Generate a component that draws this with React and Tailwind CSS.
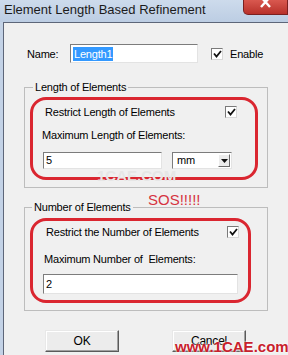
import React from "react";

const font = { fontFamily: '"Liberation Sans", Arial, sans-serif' };

function Check({ className = "" }) {
  return (
    <div
      className={`w-[12px] h-[12px] bg-white border border-t-[#7a7a7a] border-l-[#7a7a7a] border-b-[#d8d8d8] border-r-[#d8d8d8] flex items-center justify-center shrink-0 ${className}`}
    >
      <svg width="9" height="8" viewBox="0 0 9 8">
        <path d="M1 3.5 L3.5 6.5 L8 1" stroke="#111" strokeWidth="1.8" fill="none" />
      </svg>
    </div>
  );
}

function Field({ className = "", children }) {
  return (
    <div
      className={`bg-white border border-t-[#7c7c7c] border-l-[#7c7c7c] border-b-[#e3e3e3] border-r-[#e3e3e3] flex items-center pl-[2px] text-[11px] leading-none text-black ${className}`}
    >
      {children}
    </div>
  );
}

function Button({ children, className = "" }) {
  return (
    <div
      className={`w-[74px] h-[22px] bg-[#ececec] border border-t-[#e8e8e8] border-l-[#e8e8e8] border-b-[#5a5a5a] border-r-[#5a5a5a] shadow-[inset_-1px_-1px_0_#a0a0a0,inset_1px_1px_0_#ffffff] flex items-center justify-center text-[12px] text-black ${className}`}
    >
      {children}
    </div>
  );
}

export default function App() {
  return (
    <div
      className="relative w-[288px] h-[355px] overflow-hidden bg-[#c3d2e6] tracking-[-0.2px]"
      style={font}
    >
      {/* Title bar */}
      <div className="h-[22px] flex items-start bg-gradient-to-b from-[#cddbec] to-[#bccde3]">
        <div className="pl-[4px] pt-[2px] text-[13px] leading-[16px] text-[#1b1b1b] tracking-normal">
          Element Length Based Refinement
        </div>
        <div className="ml-auto w-[45px] h-[15px] rounded-bl-[5px] border border-t-0 border-[#7a2020] bg-gradient-to-b from-[#d9584f] to-[#b8302a] flex justify-center items-start overflow-hidden">
          <svg width="12" height="9" viewBox="0 0 12 9">
            <path d="M1 -3 L10 7 M10 -3 L1 7" stroke="#ffffff" strokeWidth="2.4" fill="none" />
          </svg>
        </div>
      </div>

      {/* Dialog body */}
      <div className="ml-[3px] h-[333px] border-l border-t border-[#5d6679] bg-[#f0f0f0] text-[11px] text-black">
        {/* Name row */}
        <div className="mt-[21px] flex items-center h-[19px]">
          <div className="ml-[23px] w-[43px] leading-[14px]">Name:</div>
          <Field className="w-[128px] h-[19px]">
            <span className="bg-[#3399ff] text-white px-[1px] leading-[14px]">Length1</span>
          </Field>
          <Check className="ml-[13px]" />
          <div className="ml-[7px] leading-[14px]">Enable</div>
        </div>

        {/* Group 1 */}
        <fieldset className="mt-[17px] ml-[20px] w-[244px] h-[108px] border border-[#bdbdbd] box-border">
          <legend className="ml-[8px] px-[2px] leading-[14px] text-[11px]">Length of Elements</legend>
          <div className="mt-[3px] ml-[5px] w-[228px] h-[83px] border-[3px] border-[#da2630] rounded-[16px] box-border flex flex-col">
            <div className="mt-[5px] flex items-center h-[14px]">
              <div className="pl-[12px] leading-[14px]">Restrict Length of Elements</div>
              <Check className="ml-auto mr-[18px]" />
            </div>
            <div className="mt-[9px] pl-[9px] leading-[14px] h-[14px]">Maximum Length of Elements:</div>
            <div className="mt-[10px] flex items-center">
              <Field className="ml-[10px] w-[119px] h-[17px]">5</Field>
              <Field className="ml-[10px] w-[60px] h-[17px] pl-[4px]">
                <span>mm</span>
                <div className="ml-auto mr-[1px] w-[12px] h-[13px] bg-[#ececec] border border-t-[#ffffff] border-l-[#ffffff] border-b-[#6a6a6a] border-r-[#6a6a6a] flex items-center justify-center">
                  <svg width="7" height="4" viewBox="0 0 7 4">
                    <path d="M0 0 H7 L3.5 4 Z" fill="#111" />
                  </svg>
                </div>
              </Field>
            </div>
          </div>
        </fieldset>

        {/* Group 2 */}
        <fieldset className="mt-[12px] ml-[20px] w-[244px] h-[111px] border border-[#bdbdbd] box-border">
          <legend className="ml-[7px] px-[2px] leading-[14px] text-[11px]">Number of Elements</legend>
          <div className="mt-[4px] ml-[5px] w-[221px] h-[85px] border-[3px] border-[#da2630] rounded-[16px] box-border flex flex-col">
            <div className="mt-[4px] flex items-center h-[14px]">
              <div className="pl-[13px] leading-[14px]">Restrict the Number of Elements</div>
              <Check className="ml-auto mr-[9px]" />
            </div>
            <div className="mt-[13px] pl-[11px] leading-[14px] h-[14px] whitespace-pre">Maximum Number of  Elements:</div>
            <div className="mt-[8px] flex items-center">
              <Field className="ml-[10px] w-[195px] h-[20px]">2</Field>
            </div>
          </div>
        </fieldset>

        {/* Buttons */}
        <div className="mt-[19px] flex">
          <Button className="ml-[41px]">OK</Button>
          <Button className="ml-[53px]">Cancel</Button>
        </div>
      </div>

      {/* Overlays: watermark & annotations */}
      <div className="absolute left-[97px] top-[168px] text-[15px] font-bold text-[#e6e6e6] tracking-normal leading-[16px]">
        1CAE.COM
      </div>
      <div className="absolute left-[148px] top-[191px] text-[15px] text-[#d6343f] tracking-normal leading-[17px]">
        SOS!!!!!
      </div>
      <div
        className="absolute left-[175px] top-[338px] text-[15px] font-bold text-[#c8202b] tracking-normal leading-[17px]"
        style={{ textShadow: "0 0 2px #fff, 0 0 2px #fff" }}
      >
        www.1CAE.com
      </div>
    </div>
  );
}
